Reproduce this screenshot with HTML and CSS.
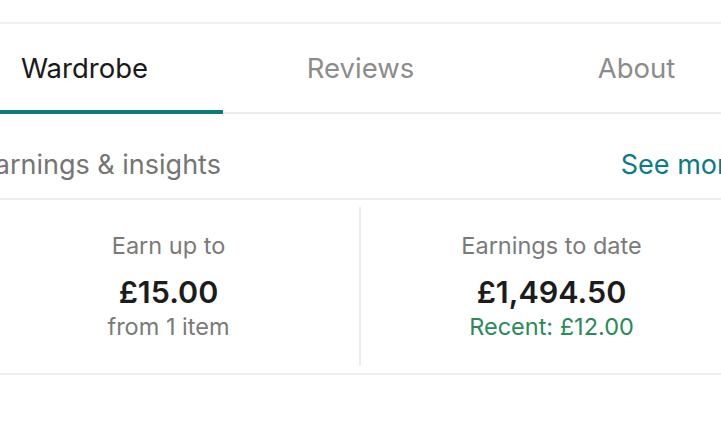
FILE: index.html
```html
<!DOCTYPE html>
<html lang="en">
<head>
<meta charset="utf-8">
<title>Profile</title>
<link rel="stylesheet" href="styles.css">
</head>
<body>
<div class="viewport">
  <main class="page">
    <nav class="tabs">
      <div class="tab tab-active">Wardrobe</div>
      <div class="tab">Reviews</div>
      <div class="tab">About</div>
    </nav>
    <section class="insights">
      <header class="section-head">
        <span class="section-title">Earnings &amp; insights</span>
        <a class="section-link" href="#">See more</a>
      </header>
      <div class="stats">
        <div class="stat stat-left">
          <div class="stat-label">Earn up to</div>
          <div class="stat-value">£15.00</div>
          <div class="stat-note">from 1 item</div>
        </div>
        <div class="stat">
          <div class="stat-label">Earnings to date</div>
          <div class="stat-value">£1,494.50</div>
          <div class="stat-note stat-note-green">Recent: £12.00</div>
        </div>
      </div>
    </section>
  </main>
</div>
</body>
</html>
```
FILE: styles.css
```css
html, body {
  margin: 0;
  padding: 0;
  background: #ffffff;
}

body {
  width: 721px;
  height: 438px;
  overflow: hidden;
  font-family: Inter, "Noto Sans", "Liberation Sans", sans-serif;
  color: #1c1c1c;
}

.viewport {
  display: flex;
  justify-content: center;
  width: 721px;
  overflow: hidden;
}

.page {
  flex: 0 0 828px;
  width: 828px;
  padding-top: 22px;
}

.tabs {
  display: grid;
  grid-template-columns: repeat(3, 1fr);
  border-top: 2px solid #f0f0f0;
  border-bottom: 2px solid #ececec;
}

.tab {
  height: 88px;
  display: flex;
  align-items: center;
  justify-content: center;
  font-size: 27.5px;
  color: #8c8c8c;
  position: relative;
}

.tab-active {
  color: #1a1a1a;
}

.tab-active::after {
  content: "";
  position: absolute;
  left: 0;
  right: 0;
  bottom: -2px;
  height: 4px;
  background: #0a7b85;
}

.section-head {
  display: flex;
  justify-content: space-between;
  align-items: flex-end;
  padding: 0 32px 17px;
  height: 67px;
  border-bottom: 2px solid #ededed;
  font-size: 27px;
  line-height: 32px;
}

.section-title {
  color: #757575;
}

.section-link {
  color: #0a7b85;
  text-decoration: none;
}

.stats {
  display: grid;
  grid-template-columns: 1fr 1fr;
  margin: 0 32px;
  padding: 7px 0;
  border-bottom: 2px solid #ededed;
}

.stat {
  height: 159px;
  display: flex;
  flex-direction: column;
  align-items: center;
  justify-content: center;
  text-align: center;
}

.stat-left {
  border-right: 2px solid #ececec;
}

.stat-label {
  font-size: 23.5px;
  line-height: 30px;
  color: #7a7a7a;
  margin-bottom: 11.5px;
}

.stat-value {
  font-size: 30.5px;
  line-height: 38px;
  font-weight: 600;
  color: #1c1c1c;
}

.stat-note {
  font-size: 23.5px;
  line-height: 30px;
  margin-top: 1.5px;
  color: #7a7a7a;
}

.stat-note-green {
  color: #2a8a5a;
}
```
